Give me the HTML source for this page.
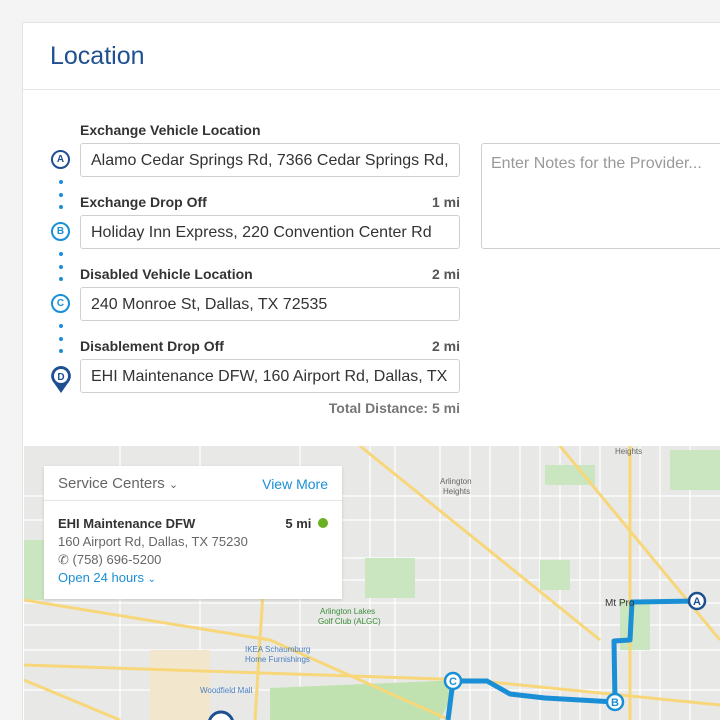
<!DOCTYPE html>
<html><head><style>
*{box-sizing:border-box;margin:0;padding:0}
html,body{width:720px;height:720px;overflow:hidden}
body{background:#f4f4f4;font-family:"Liberation Sans",sans-serif;position:relative}
.card{position:absolute;left:22px;top:22px;width:698px;height:698px;background:#fff;border:1px solid #e4e4e4;border-right:none;border-bottom:none}
.abs{position:absolute}
.title{left:50px;top:42px;font-size:25px;color:#1d4f91}
.hr{left:22px;top:89px;width:698px;height:1px;background:#e6e6e6}
.lbl{font-size:14px;font-weight:bold;color:#333;left:80px}
.mi{font-size:14px;color:#555;text-align:right;font-weight:bold}
.inp{left:80px;width:380px;height:34px;border:1px solid #cfcfcf;border-radius:3px;font-size:16px;color:#333;padding:8px 0 0 10px;white-space:nowrap;overflow:hidden}
.circ{width:19px;height:19px;border-radius:50%;border:2.5px solid;font-size:10px;font-weight:bold;left:51px;display:flex;align-items:center;justify-content:center}
.dot{width:4px;height:4px;border-radius:50%;background:#1a8fd6;left:59px}
</style></head><body>
<div class="card"></div>
<div class="abs title">Location</div>
<div class="abs hr"></div>

<div class="abs lbl" style="top:122px">Exchange Vehicle Location</div>
<div class="abs inp" style="top:143px">Alamo Cedar Springs Rd, 7366 Cedar Springs Rd,</div>
<div class="abs lbl" style="top:194px">Exchange Drop Off</div><div class="abs mi" style="top:194px;left:380px;width:80px">1 mi</div>
<div class="abs inp" style="top:215px">Holiday Inn Express, 220 Convention Center Rd</div>
<div class="abs lbl" style="top:266px">Disabled Vehicle Location</div><div class="abs mi" style="top:266px;left:380px;width:80px">2 mi</div>
<div class="abs inp" style="top:287px">240 Monroe St, Dallas, TX 72535</div>
<div class="abs lbl" style="top:338px">Disablement Drop Off</div><div class="abs mi" style="top:338px;left:380px;width:80px">2 mi</div>
<div class="abs inp" style="top:359px">EHI Maintenance DFW, 160 Airport Rd, Dallas, TX</div>
<div class="abs" style="top:400px;left:260px;width:200px;text-align:right;font-size:14px;font-weight:bold;color:#777">Total Distance: 5 mi</div>

<div class="abs" style="left:481px;top:143px;width:250px;height:106px;border:1px solid #cfcfcf;border-radius:3px;font-size:16px;color:#999;padding:11px 0 0 9px">Enter Notes for the Provider...</div>

<div class="abs circ" style="top:150px;border-color:#1d4f91;color:#1d4f91">A</div>
<div class="abs dot" style="top:180px"></div><div class="abs dot" style="top:193px"></div><div class="abs dot" style="top:205px"></div>
<div class="abs circ" style="top:222px;border-color:#1a8fd6;color:#1a8fd6">B</div>
<div class="abs dot" style="top:252px"></div><div class="abs dot" style="top:265px"></div><div class="abs dot" style="top:277px"></div>
<div class="abs circ" style="top:294px;border-color:#1a8fd6;color:#1a8fd6">C</div>
<div class="abs dot" style="top:324px"></div><div class="abs dot" style="top:337px"></div><div class="abs dot" style="top:349px"></div>
<svg class="abs" style="left:50px;top:365px" width="22" height="30" viewBox="0 0 22 30"><path d="M11 1a10 10 0 0 1 7 17L11 28 4 18A10 10 0 0 1 11 1z" fill="#1d4f91"/><circle cx="11" cy="11" r="7" fill="#fff"/><text x="11" y="15" font-size="10" font-weight="bold" text-anchor="middle" fill="#1d4f91" font-family="Liberation Sans">D</text></svg>

<svg class="abs" style="left:24px;top:446px" width="696" height="274" viewBox="24 446 696 274">
<rect x="24" y="446" width="696" height="274" fill="#e8e8e6"/>
<g stroke="#fff" stroke-width="1.2">
<path d="M24 496H720M24 558H720M24 603H720M24 650H720M24 690H720M120 446V720M200 446V720M300 446V720M370 446V720M395 446V720M440 446V720M520 446V720M560 446V720M600 446V720M660 446V720M690 446V720M24 520H720M24 580H720M24 625H720M470 446V720M490 446V720M540 446V720M580 446V720M640 446V720"/>
</g>
<g fill="#c9e6c0"><rect x="365" y="558" width="50" height="40"/><rect x="540" y="560" width="30" height="30"/><rect x="620" y="600" width="30" height="50"/><rect x="545" y="465" width="50" height="20"/><rect x="670" y="450" width="50" height="40"/><rect x="24" y="540" width="20" height="60"/></g>
<path d="M270 688L460 680 440 720H270Z" fill="#bfe2b0"/>
<path d="M150 650h60v70h-60z" fill="#f2e6cc"/>
<g stroke="#f7d77a" stroke-width="3" fill="none">
<path d="M24 665L470 680 720 705"/><path d="M360 446L600 640"/><path d="M560 446L720 640"/><path d="M24 600L270 640 450 720"/><path d="M24 680L120 720"/><path d="M265 560L255 720"/><path d="M630 446V720"/>
</g>
<g stroke="#1a8fd6" stroke-width="5" fill="none" stroke-linejoin="round">
<path d="M448 720L453 681H487L510 694L545 698L615 702L614 641L630 640L632 602L697 601"/>
</g>
<g font-family="Liberation Sans" font-weight="bold" font-size="11" text-anchor="middle">
<circle cx="697" cy="601" r="8" fill="#fff" stroke="#1d4f91" stroke-width="2.5"/><text x="697" y="605" fill="#1d4f91">A</text>
<circle cx="615" cy="702" r="8" fill="#fff" stroke="#1a8fd6" stroke-width="2.5"/><text x="615" y="706" fill="#1a8fd6">B</text>
<circle cx="453" cy="681" r="8" fill="#fff" stroke="#1a8fd6" stroke-width="2.5"/><text x="453" y="685" fill="#1a8fd6">C</text>
<circle cx="221" cy="724" r="12" fill="#fff" stroke="#1d4f91" stroke-width="3"/>
</g>
<g font-family="Liberation Sans" font-size="8" fill="#666"><text x="440" y="484">Arlington</text><text x="443" y="494">Heights</text><text x="605" y="606" font-size="10" fill="#333">Mt Pro</text><text x="320" y="614" fill="#3a8f3a">Arlington Lakes</text><text x="318" y="624" fill="#3a8f3a">Golf Club (ALGC)</text><text x="245" y="652" fill="#4a7fc0">IKEA Schaumburg</text><text x="245" y="662" fill="#4a7fc0">Home Furnishings</text><text x="200" y="693" fill="#4a7fc0">Woodfield Mall</text><text x="615" y="454">Heights</text></g>
</svg>

<div class="abs" style="left:44px;top:466px;width:298px;height:133px;background:#fff;box-shadow:0 1px 3px rgba(0,0,0,.15)">
<div class="abs" style="left:14px;top:9px;font-size:15px;color:#666">Service Centers <span style="font-size:11px">&#8964;</span></div>
<div class="abs" style="right:14px;top:10px;font-size:14px;color:#1a8fd6">View More</div>
<div class="abs" style="left:0;top:34px;width:298px;height:1px;background:#e6e6e6"></div>
<div class="abs" style="left:14px;top:50px;font-size:13px;font-weight:bold;color:#333">EHI Maintenance DFW</div>
<div class="abs" style="right:14px;top:50px;font-size:13px;font-weight:bold;color:#333">5 mi <span style="display:inline-block;width:10px;height:10px;border-radius:50%;background:#6ab023;margin-left:3px"></span></div>
<div class="abs" style="left:14px;top:68px;font-size:13px;color:#666">160 Airport Rd, Dallas, TX 75230</div>
<div class="abs" style="left:14px;top:86px;font-size:13px;color:#666">&#9990; (758) 696-5200</div>
<div class="abs" style="left:14px;top:104px;font-size:13px;color:#1a8fd6">Open 24 hours <span style="font-size:10px">&#8964;</span></div>
</div>
</body></html>
